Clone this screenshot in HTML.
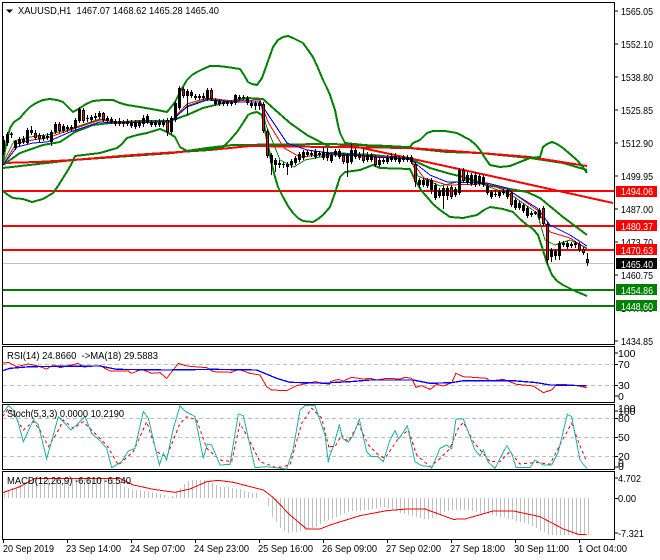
<!DOCTYPE html>
<html><head><meta charset="utf-8"><style>
html,body{margin:0;padding:0;background:#fff;width:660px;height:560px;overflow:hidden}
svg{display:block;position:absolute;left:0;top:0}
text{font-family:"Liberation Sans",sans-serif;font-size:10.5px;fill:#000}
.n{fill:none}
</style></head><body>
<svg width="660" height="560" viewBox="0 0 660 560" xmlns="http://www.w3.org/2000/svg">
<rect width="660" height="560" fill="#fff"/>
<!-- main levels -->
<g shape-rendering="crispEdges">
<path d="M3 263.5H614" stroke="#c0c0c0" stroke-width="1"/>
<path d="M3 191H614M3 226H614M3 250H614" stroke="#f00" stroke-width="2"/>
<path d="M3 290H614M3 306H614" stroke="#008000" stroke-width="2"/>
</g>
<!-- long MA / trend -->
<g class="n" fill="none" shape-rendering="crispEdges" stroke-linejoin="round">
<polyline stroke="#008000" stroke-width="2" points="3,168 73,160 173,153 207,148 233,145 330,144 390,146 447,152 480,153 530,158 563,163 587,170"/>
<polyline stroke="#f00" stroke-width="2" points="3,163 37,162 73,160 133,155 210,150 250,146 330,147 410,148 480,153 530,157 587,166"/>
<polyline stroke="#f00" stroke-width="2" points="340,146 353,146 413,159 500,178 613,203"/>
<!-- BB upper -->
<polyline stroke="#008000" stroke-width="2" points="3,163 5,150 7,140 10,128 14,122 20,118 25,112 30,107 36,103 43,100 50,99 57,100 63,102 68,107 73,112 80,108 86,104 93,101 103,100 113,100 120,103 127,105 140,107 157,110 167,112 172,106 175,102 181,90 187,80 192,75 197,72 203,69 210,66 218,66 227,67 240,69 244,75 248,82 252,84 257,85 262,78 267,64 273,47 278,40 283,37 288,36 293,38 303,43 308,50 313,57 318,68 323,80 327,88 330,95 335,110 338,125 340,133 345,143 373,146 410,147 413,143 420,140 424,136 427,133 433,131 445,131 451,132 457,133 470,140 476,145 480,150 485,158 490,165 500,167 510,166 520,162 530,158 540,157 543,147 547,144 552,142 557,144 563,148 570,154 577,160 582,166 587,173"/>
<!-- BB lower -->
<polyline stroke="#008000" stroke-width="2" points="3,191 8,195 13,198 23,199 32,202 43,199 53,193 58,186 63,178 68,170 72,163 75,156 100,153 117,148 122,144 127,138 137,135 147,133 160,129 167,132 175,137 180,147 187,151 207,150 223,147 230,140 237,132 243,123 248,115 252,113 257,112 262,115 267,140 272,165 275,177 278,187 283,197 288,206 293,213 298,218 303,221 313,222 318,219 323,215 330,207 335,193 340,177 345,172 360,170 373,165 380,168 410,169 415,180 421,190 427,197 433,204 440,210 450,217 463,218 477,215 484,210 490,207 503,209 513,212 520,219 527,225 533,229 538,235 542,247 547,263 552,275 557,281 563,285 575,291 587,296"/>
<!-- BB mid -->
<polyline stroke="#008000" stroke-width="2" points="3,165 20,153 43,145 60,142 75,132 93,125 110,123 140,121 170,121 187,115 203,108 227,102 247,98 263,99 273,108 290,123 307,135 330,147"/>
<polyline stroke="#008000" stroke-width="2" points="330,153 373,155 410,159 430,168 447,173 463,177 487,185 510,189 527,192 540,198 563,217 587,235"/>
<!-- thin MAs -->
<polyline stroke="#008000" stroke-width="1" points="3,163 14,141 30,137 47,135 70,129 100,119 115,122 170,122 187,106 207,99 233,101 260,100 266,125 280,160 294,167 305,160 330,155 373,156 410,159 418,176 440,186 470,179 487,186 513,196 537,213 545,240 555,245 570,240 587,248"/>
<polyline stroke="#f00" stroke-width="1" points="3,165 16,144 32,140 47,138 70,130 100,120 115,122 170,122 187,104 207,98 233,101 260,100 268,122 284,148 300,157 330,154 373,156 410,159 424,178 447,185 487,184 513,193 537,210 550,232 570,238 587,249"/>
<polyline stroke="#00f" stroke-width="1" points="3,165 17,147 33,143 47,142 70,132 100,122 113,123 170,122 187,107 207,100 233,102 260,102 267,113 287,143 307,150 330,153 373,157 410,159 430,175 447,182 487,183 507,188 513,193 537,208 550,225 570,235 587,246"/>
</g>
<!-- candles -->
<g fill="none" shape-rendering="crispEdges">
<path id="w" stroke="#000" stroke-width="1" d="M3.5 136V155M7.5 132V146M11.5 132V138M15.5 140V150M19.5 137V146M23.5 136V144M27.5 128V145M31.5 126V135M35.5 130V140M39.5 133V142M43.5 134V141M47.5 133V140M51.5 130V146M55.5 122V134M59.5 122V133M63.5 124V133M67.5 125V132M71.5 125V131M75.5 118V130M79.5 107V123M83.5 108V123M87.5 115V122M91.5 115V122M95.5 113V120M99.5 111V119M103.5 112V122M107.5 116V123M111.5 117V124M115.5 119V126M119.5 118V126M123.5 120V127M127.5 119V126M131.5 120V128M135.5 120V129M139.5 120V128M143.5 115V127M147.5 114V124M151.5 120V127M155.5 120V127M159.5 119V127M163.5 119V127M167.5 118V136M171.5 116V134M175.5 101V122M179.5 86V110M183.5 87V98M187.5 89V115M191.5 90V98M195.5 94V100M199.5 94V100M203.5 93V100M207.5 88V101M211.5 88V101M215.5 98V106M219.5 99V106M223.5 100V106M227.5 100V106M231.5 100V106M235.5 94V105M239.5 95V101M243.5 95V100M247.5 96V105M251.5 101V108M255.5 101V110M259.5 101V110M263.5 102V133M267.5 129V158M271.5 153V175M275.5 158V172M279.5 160V168M283.5 162V168M287.5 162V175M291.5 159V168M295.5 156V165M299.5 152V162M303.5 150V160M307.5 150V157M311.5 150V157M315.5 149V159M319.5 151V157M323.5 147V160M327.5 148V161M331.5 153V163M335.5 149V157M339.5 149V159M343.5 153V164M347.5 153V177M351.5 144V164M355.5 148V159M359.5 152V160M363.5 148V163M367.5 152V162M371.5 153V162M375.5 155V167M379.5 158V167M383.5 158V164M387.5 155V164M391.5 153V162M395.5 153V162M399.5 156V164M403.5 155V162M407.5 155V162M411.5 155V164M415.5 162V187M419.5 178V188M423.5 178V187M427.5 178V188M431.5 178V194M435.5 183V200M439.5 188V198M443.5 186V209M447.5 186V200M451.5 185V199M455.5 187V197M459.5 168V195M463.5 168V183M467.5 172V185M471.5 173V186M475.5 172V187M479.5 174V186M483.5 175V187M487.5 184V195M491.5 190V199M495.5 190V197M499.5 190V198M503.5 189V195M507.5 188V199M511.5 191V207M515.5 198V210M519.5 201V210M523.5 203V213M527.5 206V218M531.5 211V217M535.5 211V215M539.5 208V220M543.5 206V226M547.5 222V264M551.5 248V262M555.5 249V260M559.5 241V260M563.5 241V247M567.5 241V249M571.5 242V248M575.5 241V248M579.5 242V252M583.5 247V255M587.5 253V266"/>
<path stroke="#000" stroke-width="3" d="M3.5 140V152M7.5 134V143M11.5 133.500V135M15.500 141V148M19.500 139V144M23.500 139V142M27.500 130V143M31.500 130V133M35.500 133V138M39.500 135V139M43.500 136V139M47.500 136V138M51.500 132V142M55.500 124V132M59.500 124V131M63.500 126V131M67.500 127V129M71.500 127V129M75.500 120V128M79.500 109V121M83.500 110V121M87.500 118V119M91.500 117V120M95.500 116V118M99.500 113V117M103.500 113V120M107.500 118V121M111.500 119V122M115.500 121V124M119.500 121V124M123.500 122V124M127.500 121V124M131.500 123V126M135.500 122V127M139.500 122V126M143.500 118V124M147.500 116V122M151.500 122V125M155.500 122V125M159.500 122V125M163.500 122V125M167.500 120V132M171.500 118V132M175.500 103V120M179.500 88V108M183.500 89V96M187.500 91V96M191.500 92V96M195.500 96V98M199.500 96V98M203.500 96V98M207.500 90V99M211.500 90V99M215.500 100V104M219.500 101V104M223.500 102V104M227.500 102V104M231.500 102V104M235.500 95V103M239.500 97V99M243.500 97V98M247.500 98V103M251.500 103V106M255.500 103V106M259.500 103V106M263.500 104V131M267.500 131V156M271.500 155V163M275.500 160V165M279.500 163V165M283.500 164V165M287.500 164V167M291.500 161V165M295.500 158V163M299.500 154V160M303.500 152V158M307.500 152V155M311.500 153V155M315.500 151V157M319.500 153V155M323.500 152V158M327.500 152V158M331.500 155V161M335.500 151V155M339.500 151V157M343.500 155V162M347.500 155V163M351.500 150V162M355.500 150V157M359.500 154V158M363.500 155V161M367.500 155V160M371.500 155V160M375.500 157V165M379.500 160V165M383.500 160V162M387.500 158V162M391.500 156V160M395.500 156V160M399.500 158V162M403.500 157V160M407.500 157V160M411.500 157V162M415.500 164V182M419.500 180V185M423.500 180V185M427.500 180V186M431.500 180V190M435.500 185V198M439.500 190V196M443.500 188V196M447.500 188V196M451.500 187V197M455.500 189V195M459.500 170V193M463.500 170V181M467.500 175V183M471.500 175V184M475.500 175V185M479.500 176V184M483.500 177V185M487.500 186V193M491.500 192V197M495.500 194V195M499.500 192V196M503.500 191V193M507.500 190V197M511.500 193V205M515.500 200V208M519.500 203V208M523.500 205V211M527.500 208V216M531.500 213V215M535.500 212V214M539.500 210V218M543.500 208V224M547.500 224V260M551.500 250V257M555.500 251V256M559.500 243V256M563.500 243V245M567.500 243V247M571.500 244V246M575.500 243V245M579.500 244V250M583.500 249V253M587.500 259V263"/>
<path stroke="#f00" stroke-width="1" d="M35.500 134V137M39.500 136V138M59.500 125V130M83.500 111V120M103.500 114V119M167.500 121V131M183.500 90V95M211.500 91V98M263.500 105V130M267.500 132V155M343.500 156V161M363.500 156V160M375.500 158V164M415.500 165V181M451.500 188V196M463.500 171V180M511.500 194V204M543.500 209V223M547.500 225V259M579.500 245V249M583.500 250V252M587.500 260V262"/>
</g>
<!-- panels frame -->
<g fill="none" stroke="#000" stroke-width="1" shape-rendering="crispEdges">
<rect x="2.500" y="2.500" width="612" height="342"/>
<rect x="2.500" y="346.500" width="612" height="56"/>
<rect x="2.500" y="404.500" width="612" height="65"/>
<rect x="2.500" y="471.500" width="612" height="68"/>
<path d="M614.500 11H618M614.500 44H618M614.500 77H618M614.500 110H618M614.500 143H618M614.500 176H618M614.500 209H618M614.500 242H618M614.500 275H618M614.500 341H618M614.500 353H618M614.500 364.500H618M614.500 385.500H618M614.500 396H618M614.500 411H618M614.500 418.500H618M614.500 437.500H618M614.500 456.500H618M614.500 467H618M614.500 478H618M614.500 498.500H618M614.500 533H618"/>
<path d="M3.500 539V543M67.500 539V543M131.500 539V543M195.500 539V543M259.500 539V543M323.500 539V543M387.500 539V543M451.500 539V543M515.500 539V543M579.500 539V543"/>
</g>
<!-- header -->
<path d="M6 9.500H13L9.500 13Z" fill="#000"/>
<text x="18" y="14" textLength="201" lengthAdjust="spacingAndGlyphs" xml:space="preserve">XAUUSD,H1  1467.07 1468.62 1465.28 1465.40</text>
<!-- price axis -->
<g>
<text x="621" y="15" textLength="32" lengthAdjust="spacingAndGlyphs">1565.05</text>
<text x="621" y="48" textLength="32" lengthAdjust="spacingAndGlyphs">1552.10</text>
<text x="621" y="81" textLength="32" lengthAdjust="spacingAndGlyphs">1538.80</text>
<text x="621" y="114" textLength="32" lengthAdjust="spacingAndGlyphs">1525.85</text>
<text x="621" y="147" textLength="32" lengthAdjust="spacingAndGlyphs">1512.90</text>
<text x="621" y="180" textLength="32" lengthAdjust="spacingAndGlyphs">1499.95</text>
<text x="621" y="213" textLength="32" lengthAdjust="spacingAndGlyphs">1487.00</text>
<text x="621" y="246" textLength="32" lengthAdjust="spacingAndGlyphs">1473.70</text>
<text x="621" y="279" textLength="32" lengthAdjust="spacingAndGlyphs">1460.75</text>
<text x="621" y="345" textLength="32" lengthAdjust="spacingAndGlyphs">1434.85</text>
<text x="621" y="312" textLength="32" lengthAdjust="spacingAndGlyphs">1447.80</text>
</g>
<!-- price tags -->
<g shape-rendering="crispEdges">
<rect x="616" y="186" width="41" height="11" fill="#f00"/>
<rect x="616" y="220" width="41" height="11" fill="#f00"/>
<rect x="616" y="244" width="41" height="11" fill="#f00"/>
<rect x="616" y="258" width="41" height="11" fill="#000"/>
<rect x="616" y="284" width="41" height="11" fill="#008000"/>
<rect x="616" y="300" width="41" height="11" fill="#008000"/>
</g>
<g style="fill:#fff">
<text style="fill:#fff" x="621" y="195" textLength="32" lengthAdjust="spacingAndGlyphs">1494.06</text>
<text style="fill:#fff" x="621" y="230" textLength="32" lengthAdjust="spacingAndGlyphs">1480.37</text>
<text style="fill:#fff" x="621" y="254" textLength="32" lengthAdjust="spacingAndGlyphs">1470.63</text>
<text style="fill:#fff" x="621" y="268" textLength="32" lengthAdjust="spacingAndGlyphs">1465.40</text>
<text style="fill:#fff" x="621" y="294" textLength="32" lengthAdjust="spacingAndGlyphs">1454.86</text>
<text style="fill:#fff" x="621" y="310" textLength="32" lengthAdjust="spacingAndGlyphs">1448.60</text>
</g>
<!-- sub panel grids -->
<g fill="none" stroke="#c0c0c0" stroke-width="1" stroke-dasharray="4 3" shape-rendering="crispEdges">
<path d="M3 364.500H614M3 385.500H614M3 418.500H614M3 437.500H614M3 456.500H614"/>
</g>
<!-- MACD histogram -->
<path fill="none" stroke="#c0c0c0" stroke-width="1" shape-rendering="crispEdges" d="M4.500 498V492M8.500 498V490M12.500 498V488M16.500 498V487M20.500 498V485M24.500 498V482M28.500 498V480M32.500 498V478M36.500 498V478M40.500 498V478M44.500 498V478M48.500 498V478M52.500 498V478M56.500 498V478M60.500 498V478M64.500 498V478M68.500 498V478M72.500 498V478M76.500 498V478M80.500 498V478M84.500 498V478M88.500 498V478M92.500 498V478M96.500 498V478M100.500 498V478M104.500 498V478M108.500 498V478M112.500 498V478M116.500 498V479M120.500 498V482M124.500 498V487M128.500 498V488M132.500 498V490M136.500 498V490M140.500 498V490M144.500 498V491M148.500 498V492M152.500 498V492M156.500 498V493M160.500 498V494M164.500 498V495M168.500 498V497M172.500 498V496M176.500 498V492M180.500 498V488M184.500 498V484M188.500 498V481M192.500 498V480M196.500 498V480M200.500 498V480M204.500 498V480M208.500 498V481M212.500 498V483M216.500 498V485M220.500 498V487M224.500 498V487M228.500 498V487M232.500 498V488M236.500 498V489M240.500 498V489M244.500 498V491M248.500 498V492M252.500 498V493M256.500 498V493M268.500 498V506M272.500 498V517M276.500 498V522M280.500 498V528M284.500 498V531M288.500 498V533M292.500 498V532M296.500 498V532M300.500 498V531M304.500 498V530M308.500 498V529M312.500 498V528M316.500 498V527M320.500 498V524M324.500 498V521M328.500 498V520M332.500 498V519M336.500 498V517M340.500 498V515M344.500 498V513M348.500 498V512M352.500 498V511M356.500 498V511M360.500 498V511M364.500 498V510M368.500 498V510M372.500 498V509M376.500 498V508M380.500 498V507M384.500 498V507M388.500 498V508M392.500 498V509M396.500 498V511M400.500 498V513M404.500 498V514M408.500 498V515M412.500 498V516M416.500 498V517M420.500 498V518M424.500 498V519M428.500 498V519M432.500 498V518M436.500 498V516M440.500 498V514M444.500 498V512M448.500 498V511M452.500 498V510M456.500 498V510M460.500 498V510M464.500 498V510M468.500 498V510M472.500 498V511M476.500 498V512M480.500 498V513M484.500 498V513M488.500 498V514M492.500 498V515M496.500 498V516M500.500 498V517M504.500 498V517M508.500 498V519M512.500 498V519M516.500 498V521M520.500 498V522M524.500 498V523M528.500 498V524M532.500 498V526M536.500 498V528M540.500 498V531M544.500 498V532M548.500 498V535M552.500 498V535M556.500 498V535M560.500 498V535M564.500 498V535M568.500 498V535M572.500 498V535M576.500 498V535M580.500 498V535M584.500 498V535M588.500 498V535"/>
<!-- indicator lines left half -->
<g transform="translate(0,345) scale(.33333)" fill="none" shape-rendering="crispEdges">
<polyline stroke="#f00" stroke-width="3" points="8,55 25,52 50,65 85,57 110,62 140,72 160,60 180,68 235,55 250,66 300,62 330,78 385,78 395,85 425,73 455,85 480,83 500,100 535,55 560,63 620,68 640,80 695,82 715,73 750,85 780,90 800,125 815,135 860,137 890,122 945,110 990,118"/>
<polyline stroke="#00f" stroke-width="4" points="8,77 30,70 90,65 300,63 350,73 500,75 640,73 770,75 830,100 870,112 990,115"/>
<polyline stroke="#f00" stroke-width="3" stroke-dasharray="9 9" points="8,215 25,190 45,215 70,255 100,230 120,255 145,305 170,265 190,225 220,250 250,230 285,265 320,300 355,360 400,320 440,230 470,320 500,335 540,235 560,215 590,225 620,310 660,345 695,350 720,235 745,280 780,350 830,368 870,360 905,235 935,190 965,220 990,320"/>
<polyline stroke="#20b2aa" stroke-width="3" points="8,205 25,182 40,195 55,235 70,290 100,225 115,240 140,342 175,215 185,225 213,255 245,225 255,215 275,265 300,287 320,310 335,368 365,350 385,318 405,310 430,200 445,220 478,360 490,325 500,345 520,250 540,183 555,198 585,215 610,340 622,297 635,300 660,360 690,358 715,207 730,212 765,368 800,365 860,372 880,310 900,195 915,182 945,182 975,270 985,352 990,330"/>
<polyline stroke="#f00" stroke-width="3" points="8,443 60,425 105,400 360,400 400,420 460,433 525,442 570,432 620,410 655,406 700,412 790,435 820,458 870,510 920,552 960,552 990,540"/>
</g>
<!-- indicator lines right half -->
<g transform="translate(330,345) scale(.33333)" fill="none" shape-rendering="crispEdges">
<polyline stroke="#f00" stroke-width="3" points="0,110 25,103 40,108 65,97 100,102 120,100 140,105 170,100 210,102 225,97 245,100 258,127 275,122 300,133 320,118 340,123 365,113 378,85 400,95 430,97 470,100 480,108 520,103 560,118 610,123 640,143 665,135 680,118 730,120 770,128"/>
<polyline stroke="#00f" stroke-width="4" points="0,113 60,110 120,105 250,105 300,115 365,113 400,107 550,107 620,113 660,120 770,122"/>
<polyline stroke="#f00" stroke-width="3" stroke-dasharray="9 9" points="0,305 15,305 35,270 55,290 85,235 115,300 145,330 165,340 205,280 235,255 260,330 300,365 325,345 360,310 385,250 400,232 430,290 480,350 510,350 540,320 570,357 620,352 660,358 700,280 725,235 745,290 770,350"/>
<polyline stroke="#20b2aa" stroke-width="3" points="0,330 10,305 28,240 38,280 55,292 70,270 88,223 110,320 125,335 145,335 160,350 180,285 195,257 207,282 232,242 255,350 275,362 300,365 305,370 330,310 350,300 365,312 378,222 400,222 435,315 450,332 460,315 475,352 495,370 530,302 545,325 558,367 600,368 615,345 640,360 665,360 685,320 712,208 725,215 750,345 770,370"/>
<polyline stroke="#f00" stroke-width="3" points="0,540 90,512 170,497 230,492 285,492 370,523 405,522 490,498 550,498 630,515 700,552 745,568 770,568"/>
</g>
<!-- indicator labels -->
<text x="7" y="359" textLength="151" lengthAdjust="spacingAndGlyphs" xml:space="preserve">RSI(14) 24.8660  -&gt;MA(18) 29.5883</text>
<text x="7" y="417" textLength="117" lengthAdjust="spacingAndGlyphs">Stoch(5,3,3) 0.0000 10.2190</text>
<text x="7" y="484" textLength="124" lengthAdjust="spacingAndGlyphs">MACD(12,26,9) -6.610 -6.540</text>
<!-- sub axes -->
<text x="618" y="357">100</text>
<text x="618" y="368">70</text>
<text x="618" y="389">30</text>
<text x="618" y="400">0</text>
<text x="618" y="412">100</text>
<text x="618" y="415">100</text>
<text x="618" y="422">80</text>
<text x="618" y="441">50</text>
<text x="618" y="460">20</text>
<text x="618" y="467">0</text>
<text x="618" y="470">0</text>
<text x="618" y="482" textLength="23" lengthAdjust="spacingAndGlyphs">4.702</text>
<text x="618" y="502" textLength="18" lengthAdjust="spacingAndGlyphs">0.00</text>
<text x="618" y="537" textLength="26" lengthAdjust="spacingAndGlyphs">-7.321</text>
<!-- time axis -->
<text x="3" y="552" textLength="51" lengthAdjust="spacingAndGlyphs">20 Sep 2019</text>
<text x="66" y="552" textLength="55" lengthAdjust="spacingAndGlyphs">23 Sep 14:00</text>
<text x="130" y="552" textLength="55" lengthAdjust="spacingAndGlyphs">24 Sep 07:00</text>
<text x="194" y="552" textLength="55" lengthAdjust="spacingAndGlyphs">24 Sep 23:00</text>
<text x="258" y="552" textLength="55" lengthAdjust="spacingAndGlyphs">25 Sep 16:00</text>
<text x="322" y="552" textLength="55" lengthAdjust="spacingAndGlyphs">26 Sep 09:00</text>
<text x="386" y="552" textLength="55" lengthAdjust="spacingAndGlyphs">27 Sep 02:00</text>
<text x="450" y="552" textLength="55" lengthAdjust="spacingAndGlyphs">27 Sep 18:00</text>
<text x="514" y="552" textLength="55" lengthAdjust="spacingAndGlyphs">30 Sep 11:00</text>
<text x="578" y="552" textLength="49" lengthAdjust="spacingAndGlyphs">1 Oct 04:00</text>
</svg>
</body></html>
